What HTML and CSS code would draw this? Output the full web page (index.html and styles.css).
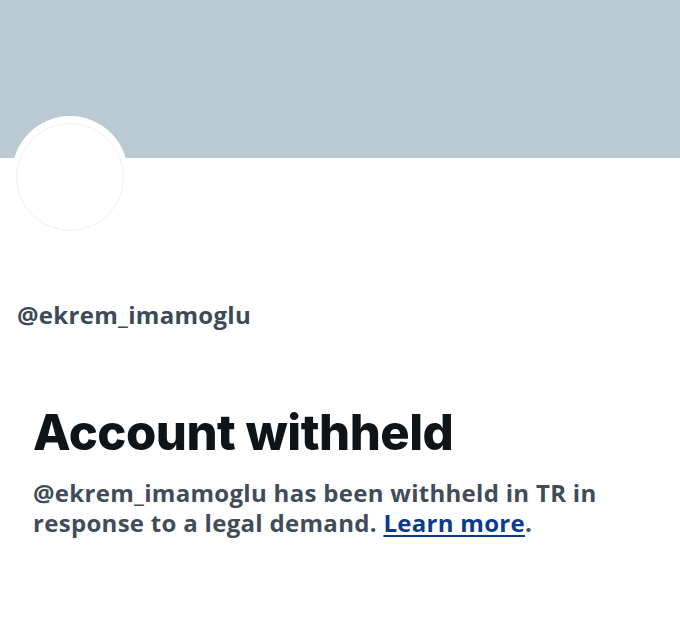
FILE: index.html
```html
<!DOCTYPE html>
<html>
<head>
<meta charset="utf-8">
<link rel="stylesheet" href="styles.css">
</head>
<body>
<div class="page">
  <div class="banner"></div>
  <div class="profile">
    <div class="avatar"><div class="avatar-inner"></div></div>
    <div class="handle">@ekrem_imamoglu</div>
  </div>
  <div class="notice">
    <h1 class="title">Account withheld</h1>
    <p class="desc">@ekrem_imamoglu has been withheld in TR in response to a legal demand. <a class="link" href="#">Learn more</a>.</p>
  </div>
</div>
</body>
</html>
```
FILE: styles.css
```css
html, body {
  margin: 0;
  padding: 0;
  background: #ffffff;
}
.page {
  width: 680px;
  height: 631px;
  overflow: hidden;
  background: #ffffff;
}
.banner {
  height: 158px;
  background: #b9cad3;
}
.profile {
  padding: 0 17px;
}
.avatar {
  box-sizing: border-box;
  width: 116px;
  height: 116px;
  border-radius: 50%;
  background: #ffffff;
  margin-top: -42px;
  margin-left: -5px;
  padding-bottom: 1px;
  display: flex;
  align-items: flex-end;
  justify-content: center;
}
.avatar-inner {
  width: 106px;
  height: 106px;
  border-radius: 50%;
  border: 1px solid #f3efef;
  background: #ffffff;
}
.handle {
  margin-top: 69px;
  font-family: "Open Sans", sans-serif;
  font-weight: 700;
  font-size: 24px;
  line-height: 28px;
  letter-spacing: 0.3px;
  color: #3d4a56;
}
.notice {
  padding: 76px 33px 0;
}
.title {
  margin: 0;
  font-family: Inter, sans-serif;
  font-weight: 800;
  font-size: 49px;
  line-height: 56px;
  letter-spacing: -0.5px;
  color: #0f1419;
}
.desc {
  margin: 17px 0 0;
  font-family: "Open Sans", sans-serif;
  font-weight: 700;
  font-size: 24px;
  line-height: 30px;
  letter-spacing: 0.3px;
  color: #414c58;
}
.link {
  color: #0b3b8f;
  text-decoration: underline;
  text-underline-offset: 3px;
}
```
